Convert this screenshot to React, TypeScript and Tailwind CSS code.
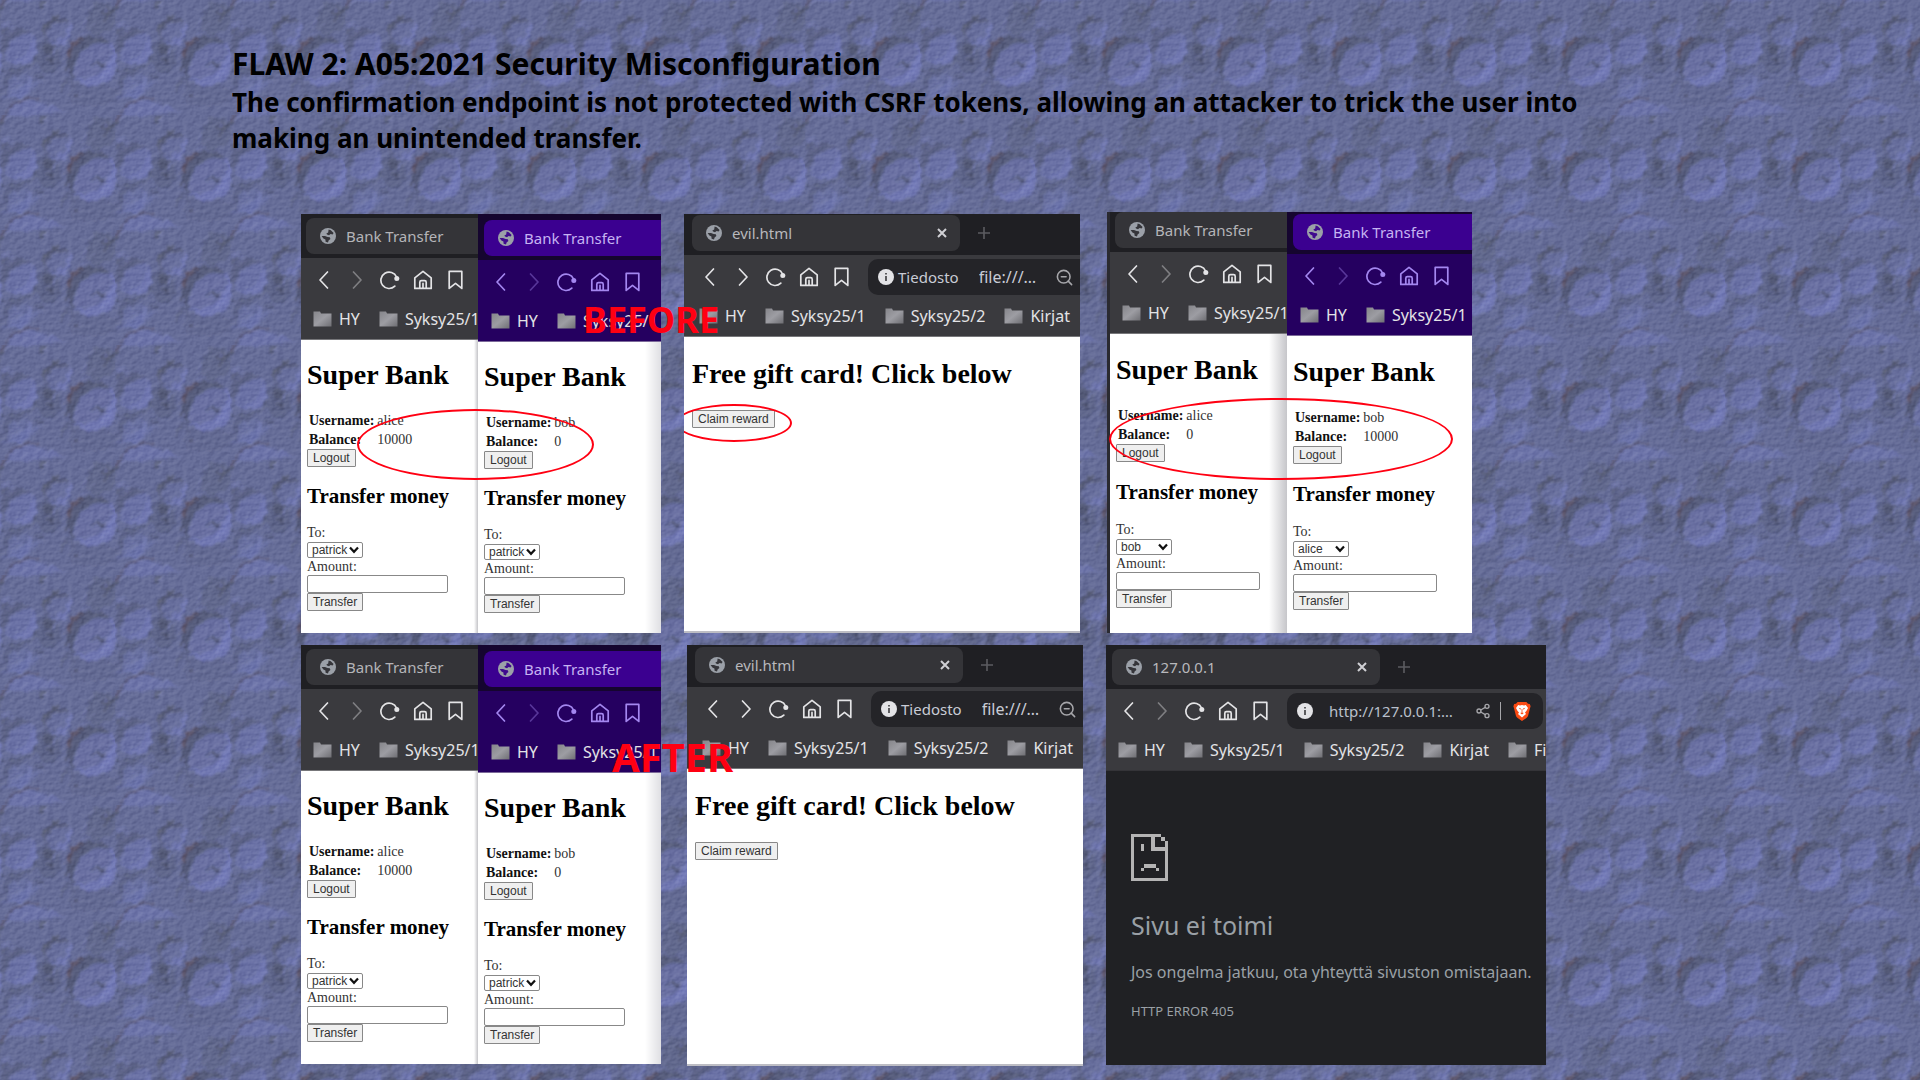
import { useId, type ReactNode } from "react";
import { Share2, ZoomOut } from "lucide-react";

type Tone = "gray" | "violet";

function Crater({ x, y, r, depth = 1, floor = 0.5 }: { x: number; y: number; r: number; depth?: number; floor?: number }) {
  const d = r * 0.72;
  const inner = r * 1.2;
  return (
    <g>
      <circle cx={x} cy={y} r={r} fill="#6c73aa" opacity={floor} />
      <path d={`M${x - d} ${y + d} A${r} ${r} 0 0 1 ${x + d} ${y - d} A${inner} ${inner} 0 0 0 ${x - d} ${y + d}Z`} fill="#464b5c" opacity={0.75 * depth} />
      <path d={`M${x + d} ${y - d} A${r} ${r} 0 0 1 ${x - d} ${y + d} A${inner} ${inner} 0 0 0 ${x + d} ${y - d}Z`} fill="#7980c4" opacity={0.7 * depth} />
    </g>
  );
}

function TileArt() {
  return (
    <g>
      <path d="M36 46 Q48 36 58 48 T50 74 Q40 70 34 62Z" fill="#586080" opacity={0.7} />
      <path d="M95 2 L118 6 L114 28 L98 36 L84 30Z" fill="#5c6380" opacity={0.6} />
      <path d="M10 108 Q22 98 40 102 L68 112 L30 116 L8 118Z" fill="#6f77b0" opacity={0.8} />
      <path d="M66 82 L118 88 L115 104 L74 106Z" fill="#5f668c" opacity={0.5} />
      <path d="M-2 98 L28 84 L44 80 L24 98Z" fill="#6b73a9" opacity={0.7} />
      <Crater x={17} y={84} r={14} depth={0.5} />
      <Crater x={58} y={31} r={14} depth={0.7} floor={0.3} />
      <Crater x={19} y={47} r={18} depth={0.6} floor={0.8} />
      <Crater x={92} y={61} r={25} depth={0.85} floor={0.6} />
      <path d="M68 58 Q70 43 84 38" fill="none" stroke="#5c4c5a" strokeWidth="3" opacity={0.8} />
      <path d="M109 70 L116 56 M100 80 L112 68" stroke="#7b82c4" strokeWidth="3" opacity={0.7} />
      <path d="M98 64 Q101 60 105 62 L101 67Z" fill="#4b516a" opacity={0.8} />
      <path d="M92 65 L99 65" stroke="#5a6080" strokeWidth="1.5" />
      <path d="M70 24 L71 32 L65 40 L62 46" fill="none" stroke="#7b82be" strokeWidth="2.4" opacity={0.8} />
      <path d="M35 44 L34 56 L22 64" fill="none" stroke="#7b82be" strokeWidth="2.4" opacity={0.7} />
      <path d="M43 30 Q46 20 60 16" fill="none" stroke="#4b505e" strokeWidth="2.5" opacity={0.7} />
      <path d="M0 120 Q8 112 12 106 Q18 99 38 97" fill="none" stroke="#57516a" strokeWidth="1.8" opacity={0.8} />
      <path d="M0 5 Q5 1 9 -4" fill="none" stroke="#57516a" strokeWidth="1.8" opacity={0.8} />
      <path d="M0 70 L12 70 L30 66 L36 58" fill="none" stroke="#525870" strokeWidth="2" opacity={0.6} />
      <path d="M40 2 L45 2 L43 9 L38 7Z" fill="#50566c" opacity={0.8} />
      <path d="M43 8 L46 3" stroke="#8288b8" strokeWidth="1.6" />
      <circle cx={106} cy={11} r={4} fill="#4a4f62" opacity={0.8} />
      <circle cx={105} cy={10} r={2.3} fill="#676d9a" />
      <path d="M104 22 L110 12 L118 6" fill="none" stroke="#4a4f62" strokeWidth="2.4" opacity={0.8} />
      <path d="M44 47 L56 45 L52 52 L45 56Z" fill="#4d536a" opacity={0.8} />
      <path d="M52 53 L57 48" stroke="#8086bd" strokeWidth="2.6" />
      <circle cx={50} cy={60} r={2} fill="#4a4f68" />
      <circle cx={67} cy={69} r={2.6} fill="#4b4f68" />
      <circle cx={68} cy={70} r={1.2} fill="#7a81b6" />
      <path d="M60 92 L68 78 L74 88" fill="none" stroke="#585e7c" strokeWidth="2" opacity={0.7} />
      <circle cx={77} cy={95} r={1.7} fill="#50556e" />
      <path d="M78 97 L80 94" stroke="#858cc0" strokeWidth="1.3" />
      <path d="M36 76 L42 73 M38 79 L44 77" stroke="#4d536d" strokeWidth="1.3" />
      <path d="M8 88 L28 80 M10 92 L30 84 M14 78 L24 86 M80 28 L90 18 M82 34 L94 24" stroke="#7e86bf" strokeWidth="1" opacity={0.7} />
      <path d="M0 24 L12 26 M4 30 L8 20" stroke="#767db2" strokeWidth="2" opacity={0.7} />
      <path d="M2 33 L10 28" stroke="#4f556b" strokeWidth="2.2" opacity={0.7} />
    </g>
  );
}

function StoneBackdrop() {
  return (
    <svg className="absolute inset-0 h-full w-full" aria-hidden="true">
      <defs>
        <filter id="soft" x="-10%" y="-10%" width="120%" height="120%" colorInterpolationFilters="sRGB">
          <feTurbulence type="fractalNoise" baseFrequency="0.12" numOctaves="3" seed="7" result="n" />
          <feDisplacementMap in="SourceGraphic" in2="n" scale="9" xChannelSelector="R" yChannelSelector="G" result="d" />
          <feGaussianBlur in="d" stdDeviation="0.9" />
        </filter>
        <filter id="grain" x="0" y="0" width="100%" height="100%" colorInterpolationFilters="sRGB">
          <feTurbulence type="fractalNoise" baseFrequency="0.16 0.22" numOctaves="3" seed="4" stitchTiles="stitch" result="n" />
          <feDiffuseLighting in="n" surfaceScale="1.4" diffuseConstant="0.95" lightingColor="#ffffff">
            <feDistantLight azimuth="225" elevation="32" />
          </feDiffuseLighting>
        </filter>
        <pattern id="stone" width="115" height="115" patternUnits="userSpaceOnUse">
          <rect width="115" height="115" fill="#666d98" />
          <g filter="url(#soft)" opacity="0.85">
            <TileArt />
            <g transform="translate(115 0)"><TileArt /></g>
            <g transform="translate(-115 0)"><TileArt /></g>
            <g transform="translate(0 -115)"><TileArt /></g>
          </g>
          <rect width="115" height="115" filter="url(#grain)" opacity="0.3" style={{ mixBlendMode: "soft-light" }} />
        </pattern>
      </defs>
      <rect width="100%" height="100%" fill="url(#stone)" />
    </svg>
  );
}

function Globe({ tone }: { tone: Tone }) {
  const land = tone === "violet" ? "#3f0a8e" : "#35353a";
  return (
    <svg viewBox="0 0 16 16" className="h-4 w-4 shrink-0" aria-hidden="true">
      <circle cx="8" cy="8" r="8" fill="#9ba0a8" />
      <path d="M8.6 1.6 L10.8 2.2 L13.6 5 L12.6 6.4 L10.6 6 L9 7.2 L7 6.6 L6.4 5.4 L8.2 4.4 Z" fill={land} />
      <path d="M1.6 8 L5 8 L7.6 9 L9.8 9.2 L10.4 11 L8.6 12.4 L8 14.4 L5.6 13.8 L5.4 11.4 L3.4 10.4 Z" fill={land} />
    </svg>
  );
}

function Glyph({ children, dim, label }: { children: ReactNode; dim?: boolean; label: string }) {
  return (
    <button type="button" aria-label={label} className={dim ? "h-5 w-5 shrink-0 opacity-40" : "h-5 w-5 shrink-0"}>
      <svg viewBox="0 0 20 20" className="h-5 w-5" fill="none" stroke="currentColor" strokeWidth="1.7" strokeLinecap="round" strokeLinejoin="round">
        {children}
      </svg>
    </button>
  );
}

function NavButtons({ forward }: { forward?: boolean }) {
  return (
    <div className="flex shrink-0 items-center gap-[13px]">
      <Glyph label="Back"><path d="M13.5 2 L6 10 L13.5 18" /></Glyph>
      <Glyph label="Forward" dim={!forward}><path d="M6.5 2 L14 10 L6.5 18" /></Glyph>
      <Glyph label="Reload">
        <path d="M14.8 16.2 A8.2 8.2 0 1 1 16.6 7" />
        <circle cx="16.8" cy="8.4" r="2.5" fill="currentColor" stroke="none" />
      </Glyph>
      <Glyph label="Home">
        <path d="M1.8 7.8 L10 1.4 L18.2 7.8 V18.4 H1.8 Z" />
        <path d="M6.8 18 V12.2 Q6.8 10.6 8.4 10.6 H11.6 Q13.2 10.6 13.2 12.2 V18 M10 13.4 V18" />
      </Glyph>
      <Glyph label="Bookmark"><path d="M3.2 1.4 H15.8 V18.4 L9.5 13.4 L3.2 18.4 Z" /></Glyph>
    </div>
  );
}

function Folder() {
  const id = useId();
  return (
    <svg viewBox="0 0 19 16" className="h-4 w-[19px] shrink-0" aria-hidden="true">
      <defs>
        <linearGradient id={id} x1="0" y1="0" x2="1" y2="1">
          <stop offset="0" stopColor="#85858a" />
          <stop offset="0.5" stopColor="#9d9da3" />
          <stop offset="1" stopColor="#6e6e73" />
        </linearGradient>
      </defs>
      <path d="M0.5 0.5 H7 L8 2.5 H18.5 V15.5 H0.5 Z" fill={`url(#${id})`} />
    </svg>
  );
}

function Bookmarks({ names }: { names: string[] }) {
  return (
    <div className="flex h-[37px] items-center gap-[19px] pb-1 text-base text-[#e3e3e6]">
      {names.map((n) => (
        <a key={n} href="#" className="flex shrink-0 items-center gap-[7px]">
          <Folder />
          {n}
        </a>
      ))}
    </div>
  );
}

function BankHalf({ tone, inset, user, balance, to, page, roomy }: { tone: Tone; inset: string; user: string; balance: string; to: string; page: string; roomy?: boolean }) {
  const id = useId();
  const violet = tone === "violet";
  return (
    <div className="flex h-full min-w-0 flex-col overflow-hidden">
      <div className={violet ? "bg-[#250060] font-['Noto_Sans',sans-serif] text-[#a487f0]" : "bg-[#3a3a3e] font-['Noto_Sans',sans-serif] text-[#e4e4e6]"}>
        <div className={`flex items-end ${inset} ${violet ? "bg-[#15052f] pb-1 pl-[6px]" : "bg-[#1f1f23] pb-1 pl-[5px]"}`}>
          <div className={violet ? "flex h-9 flex-1 items-center gap-[10px] rounded-l-lg bg-[#3b0090] pl-[14px] text-[15px] text-[#c6b3f2]" : "flex h-9 flex-1 items-center gap-[10px] rounded-l-lg bg-[#343438] pl-[14px] text-[15px] text-[#b4b4b8]"}>
            <Globe tone={tone} />
            Bank Transfer
          </div>
        </div>
        <div className="flex h-11 items-center pl-[13px]">
          <NavButtons />
        </div>
        <div className={violet ? "border-b border-[#7c6a9a] pl-[13px]" : "border-b border-[#77777a] pl-3"}>
          <Bookmarks names={["HY", "Syksy25/1"]} />
        </div>
      </div>
      <div className={`flex flex-1 flex-col items-start px-[6px] font-['Liberation_Serif',serif] text-sm text-[#333] ${roomy ? "pt-5" : "pt-[19px]"} ${page}`}>
        <h2 className="text-[28px] leading-8 font-bold text-black">Super Bank</h2>
        <table className="mt-5 leading-[19px]">
          <tbody>
            <tr>
              <th scope="row" className="pr-[3px] pl-[2px] text-left text-[#111]">Username:</th>
              <td>{user}</td>
            </tr>
            <tr>
              <th scope="row" className="pr-[3px] pl-[2px] text-left text-[#111]">Balance:</th>
              <td>{balance}</td>
            </tr>
          </tbody>
        </table>
        <button type="button" className="h-[18px] rounded-[1px] border border-[#888] bg-[#efefef] px-[5px] font-['Liberation_Sans',sans-serif] text-xs leading-4">Logout</button>
        <h3 className={`text-[21px] leading-6 font-bold text-black ${roomy ? "mt-[18px]" : "mt-[17px]"}`}>Transfer money</h3>
        <label htmlFor={`${id}-to`} className={`leading-[18px] ${roomy ? "mt-[17px]" : "mt-4"}`}>To:</label>
        <div className="relative">
          <select id={`${id}-to`} defaultValue={to} className="block h-4 w-14 appearance-none rounded-[2px] border border-[#888] bg-white pl-1 font-['Liberation_Sans',sans-serif] text-xs leading-[14px]">
            <option>{to}</option>
          </select>
          <svg viewBox="0 0 10 8" className="pointer-events-none absolute top-1 right-1 h-2 w-[10px]" fill="none" stroke="#111" strokeWidth="2.2" aria-hidden="true">
            <path d="M1 1.5 L5 5.8 L9 1.5" />
          </svg>
        </div>
        <label htmlFor={`${id}-am`} className="leading-[17px]">Amount:</label>
        <input id={`${id}-am`} type="text" className={`h-[18px] rounded-[2px] border border-[#888] bg-white ${roomy ? "w-36" : "w-[141px]"}`} />
        <button type="button" className="h-[18px] rounded-[1px] border border-[#888] bg-[#efefef] px-[5px] font-['Liberation_Sans',sans-serif] text-xs leading-4">Transfer</button>
      </div>
    </div>
  );
}

function BankPair({ aliceBalance, bobBalance, aliceTo, bobTo, inset, insetTop, pages, roomy }: { aliceBalance: string; bobBalance: string; aliceTo: string; bobTo: string; inset: string; insetTop: string; pages: [string, string]; roomy?: boolean }) {
  return (
    <div className="grid h-full grid-cols-[177px_minmax(0,1fr)] overflow-hidden whitespace-nowrap">
      <BankHalf tone="gray" inset={inset} user="alice" balance={aliceBalance} to={aliceTo} page={pages[0]} roomy={roomy} />
      <BankHalf tone="violet" inset={insetTop} user="bob" balance={bobBalance} to={bobTo} page={pages[1]} roomy={roomy} />
    </div>
  );
}

function TabStrip({ title, pad }: { title: string; pad: string }) {
  return (
    <div className={`flex items-end bg-[#1f1f23] ${pad}`}>
      <div className="flex h-9 w-[268px] items-center gap-[10px] rounded-lg bg-[#343438] pr-3 pl-[14px] text-[15px] text-[#b8b8bc]">
        <Globe tone="gray" />
        <span className="flex-1">{title}</span>
        <button type="button" aria-label="Close tab" className="h-3 w-3 text-[#d0d0d4]">
          <svg viewBox="0 0 12 12" className="h-3 w-3" stroke="currentColor" strokeWidth="2"><path d="M2 2 L10 10 M10 2 L2 10" /></svg>
        </button>
      </div>
      <button type="button" aria-label="New tab" className="mb-3 ml-[18px] h-3 w-3 text-[#5c5c61]">
        <svg viewBox="0 0 12 12" className="h-3 w-3" stroke="currentColor" strokeWidth="1.6"><path d="M6 0 V12 M0 6 H12" /></svg>
      </button>
    </div>
  );
}

function InfoDot() {
  return (
    <svg viewBox="0 0 16 16" className="h-4 w-4 shrink-0" aria-hidden="true">
      <circle cx="8" cy="8" r="8" fill="#e3e3e6" />
      <path d="M7.2 7 H8.8 V12 H7.2 Z M7.2 4 H8.8 V5.6 H7.2 Z" fill="#3a3a3e" />
    </svg>
  );
}

function EvilWindow({ pad }: { pad: string }) {
  const id = useId();
  return (
    <div className="flex h-full flex-col overflow-hidden border-b-2 border-[#bdbdc4] bg-white whitespace-nowrap">
      <div className="bg-[#3a3a3e] font-['Noto_Sans',sans-serif] text-[#e4e4e6]">
        <TabStrip title="evil.html" pad={pad} />
        <div className="flex h-11 items-center gap-4 pl-4">
          <NavButtons forward />
          <div className="flex h-9 min-w-0 flex-1 items-center rounded-l-[10px] bg-[#242428] pr-[6px] pl-[10px] text-[15px] text-[#c9ccd6]">
            <InfoDot />
            <label htmlFor={id} className="ml-1">Tiedosto</label>
            <input id={id} readOnly defaultValue="file:///…" className="ml-5 w-0 min-w-0 flex-1 bg-transparent text-base" />
            <ZoomOut className="h-[19px] w-[19px] text-[#a6a6aa]" strokeWidth={2} />
          </div>
        </div>
        <div className="border-b border-[#77777a] pl-[15px]">
          <Bookmarks names={["HY", "Syksy25/1", "Syksy25/2", "Kirjat"]} />
        </div>
      </div>
      <div className="flex flex-col items-start px-2 pt-[19px]">
        <h2 className="font-['Liberation_Serif',serif] text-[28px] leading-9 font-bold text-black">Free gift card! Click below</h2>
        <button type="button" className="mt-[18px] h-[18px] rounded-[1px] border border-[#888] bg-[#efefef] px-[5px] font-['Liberation_Sans',sans-serif] text-xs leading-4 text-[#333]">Claim reward</button>
      </div>
    </div>
  );
}

function ErrorWindow() {
  return (
    <div className="flex h-full flex-col overflow-hidden bg-[#202124] font-['Noto_Sans',sans-serif] whitespace-nowrap">
      <div className="bg-[#3a3a3e] text-[#e4e4e6]">
        <TabStrip title="127.0.0.1" pad="pt-1 pb-1 pl-[6px]" />
        <div className="flex h-11 items-center gap-4 pr-[3px] pl-[13px]">
          <NavButtons />
          <div className="flex h-9 min-w-0 flex-1 items-center rounded-[10px] bg-[#242428] pr-3 pl-[10px] text-[15px] text-[#b9c0cc]">
            <InfoDot />
            <input aria-label="Address" readOnly defaultValue="http://127.0.0.1:…" className="ml-4 w-0 min-w-0 flex-1 bg-transparent" />
            <Share2 className="h-4 w-4 text-[#a6a6aa]" />
            <span className="ml-[9px] h-[18px] w-px bg-[#a6a6aa]" />
            <svg viewBox="0 0 18 20" className="ml-3 h-5 w-[18px]" role="img" aria-label="Brave">
              <path d="M4.6 1 H13.4 L15 2.8 L16.8 2.9 L17.6 5.2 L17 7.2 L15 15 Q14.6 16.2 13.4 17 L9 20 L4.6 17 Q3.4 16.2 3 15 L1 7.2 L0.4 5.2 L1.2 2.9 L3 2.8 Z" fill="#fb4b13" />
              <path d="M5.2 4 L7 4.4 L9 4 L11 4.4 L12.8 4 L15 7 L13.4 10 L12 11.4 L13 13 L9 16.6 L5 13 L6 11.4 L4.6 10 L3 7 Z" fill="#fff" />
              <path d="M5.6 6.8 L8 7.6 L7.4 8.8 Z M12.4 6.8 L10 7.6 L10.6 8.8 Z M7.2 12 L9 11.2 L10.8 12 L9 13.4 Z M8.6 8 H9.4 V11 H8.6 Z" fill="#fb4b13" />
            </svg>
          </div>
        </div>
        <div className="border-b border-[#343438] pl-3">
          <Bookmarks names={["HY", "Syksy25/1", "Syksy25/2", "Kirjat", "Fi"]} />
        </div>
      </div>
      <div className="px-[25px] pt-[63px] text-[#9aa0a6]">
        <svg viewBox="0 0 11 14" className="h-[47px] w-[37px]" fill="#b4b4b4" shapeRendering="crispEdges" aria-hidden="true">
          <path d="M0 0 H9 V1 H7 V4 H10 V2 H11 V14 H0 Z M1 1 V13 H10 V5 H6 V1 Z" fillRule="evenodd" />
          <path d="M9 1 H10 V2 H9 Z M3 3 H4 V5 H3 Z M4 9 H7.4 V10 H4 Z M3 10 H4 V11 H3 Z M7.4 10 H8.4 V11 H7.4 Z" />
        </svg>
        <h2 className="mt-7 text-[25px] leading-8">Sivu ei toimi</h2>
        <p className="mt-[19px] text-base leading-6">Jos ongelma jatkuu, ota yhteyttä sivuston omistajaan.</p>
        <p className="mt-[15px] text-[13px] leading-6">HTTP ERROR 405</p>
      </div>
    </div>
  );
}

function Ring({ place }: { place: string }) {
  return <span aria-hidden="true" className={`absolute rounded-[50%] border-2 border-[#ff0012] ${place}`} />;
}

export default function App() {
  const lightEdge = "bg-[linear-gradient(to_left,#c4c4c8,#ffffff_4px)]";
  const sideEdge = "bg-[linear-gradient(to_left,#dfdfe3,#ffffff_16px)]";
  const wideEdge = "bg-[linear-gradient(to_left,#c6c6ca,#ffffff_18px)]";
  return (
    <div className="relative min-h-screen overflow-hidden bg-[#676e9c]">
      <StoneBackdrop />
      <main className="relative flex flex-col pb-[14px]">
        <header className="pt-11 pl-[232px] font-['Noto_Sans',sans-serif] font-bold text-black">
          <h1 className="text-3xl leading-10">FLAW 2: A05:2021 Security Misconfiguration</h1>
          <p className="text-[26px] leading-9">
            The confirmation endpoint is not protected with CSRF tokens, allowing an attacker to trick the user into
            <br />
            making an unintended transfer.
          </p>
        </header>

        <section aria-label="Before" className="relative mt-14 flex items-end pl-[301px]">
          <div className="relative h-[419px] w-[360px]">
            <BankPair aliceBalance="10000" bobBalance="0" aliceTo="patrick" bobTo="patrick" inset="h-11" insetTop="h-[46px]" pages={[lightEdge, sideEdge]} />
            <Ring place="top-[195px] left-[56px] h-[71px] w-[237px]" />
          </div>
          <div className="relative ml-[23px] h-[419px] w-[396px]">
            <EvilWindow pad="pt-px pb-1 pl-2" />
            <div className="absolute top-[190px] left-0 h-[40px] w-[120px] overflow-hidden">
              <Ring place="top-0 -left-2 h-[38px] w-[116px]" />
            </div>
          </div>
          <div className="relative ml-[27px] h-[421px] w-[365px] border-l-[3px] border-[#2a2a30]">
            <BankPair roomy aliceBalance="0" bobBalance="10000" aliceTo="bob" bobTo="alice" inset="h-10" insetTop="h-[42px]" pages={[wideEdge, "bg-white"]} />
            <Ring place="top-[186px] -left-px h-[82px] w-[344px]" />
          </div>
          <strong className="absolute top-[84px] left-[583px] font-['Noto_Sans',sans-serif] text-4xl leading-12 font-bold text-[#ff0012]">BEFORE</strong>
        </section>

        <section aria-label="After" className="relative mt-3 flex items-start pl-[301px]">
          <div className="h-[419px] w-[360px]">
            <BankPair aliceBalance="10000" bobBalance="0" aliceTo="patrick" bobTo="patrick" inset="h-11" insetTop="h-[46px]" pages={[lightEdge, sideEdge]} />
          </div>
          <div className="ml-[26px] h-[421px] w-[396px]">
            <EvilWindow pad="pt-[2px] pb-1 pl-2" />
          </div>
          <div className="ml-[23px] h-[420px] w-[440px]">
            <ErrorWindow />
          </div>
          <strong className="absolute top-[88px] left-[612px] font-['Noto_Sans',sans-serif] text-[40px] leading-12 font-bold text-[#ff0012]">AFTER</strong>
        </section>
      </main>
    </div>
  );
}
